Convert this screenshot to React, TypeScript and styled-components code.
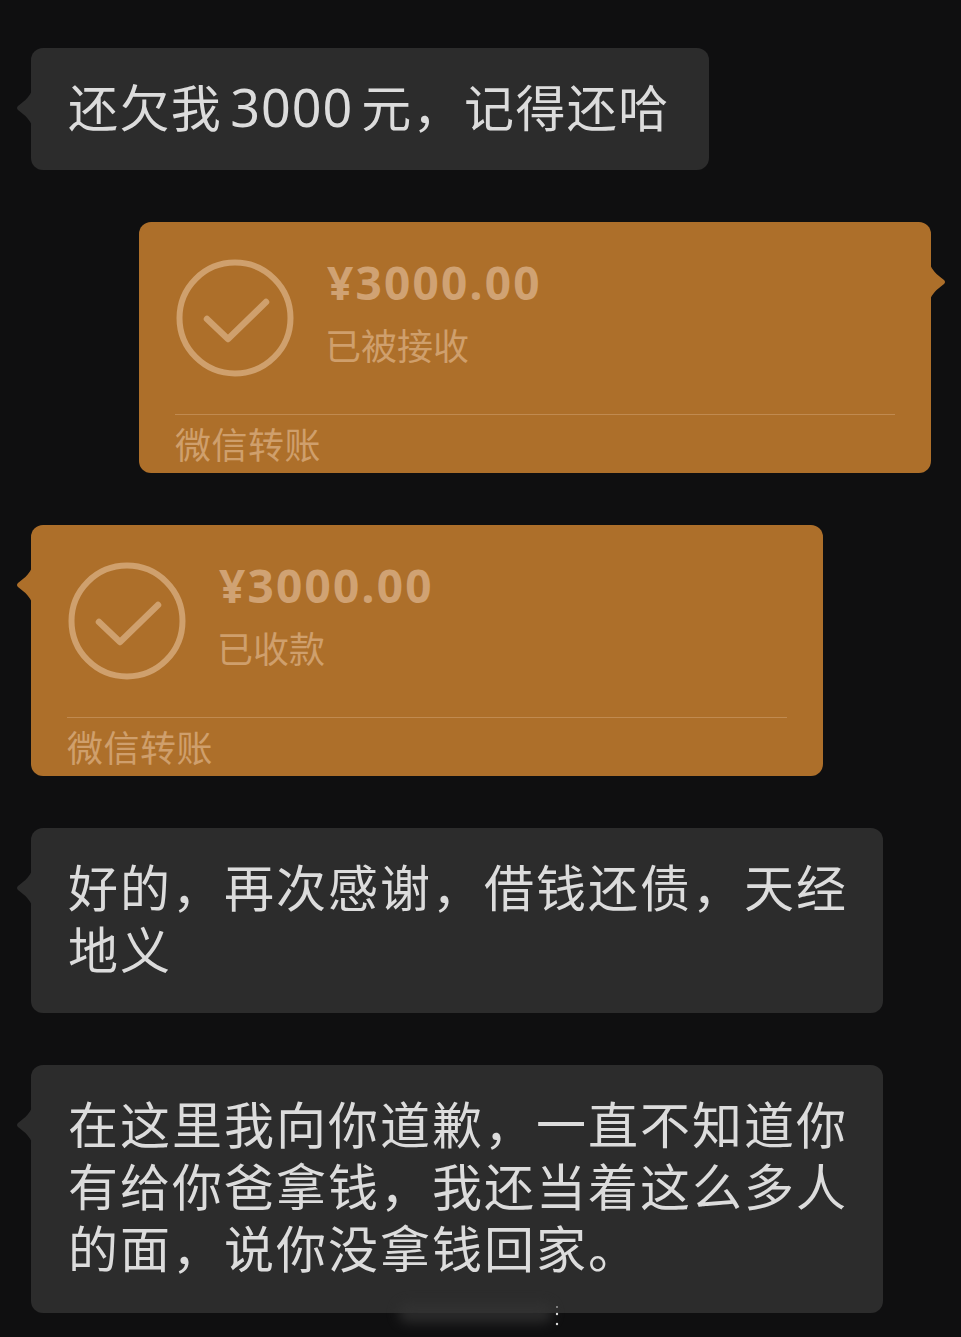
import React from "react";
import styled, { createGlobalStyle } from "styled-components";

const GlobalStyle = createGlobalStyle`
  html, body {
    margin: 0;
    padding: 0;
    background: #0f0f10;
  }
`;

const Page = styled.div`
  position: relative;
  width: 961px;
  height: 1337px;
  box-sizing: border-box;
  padding: 48px 30px 0 31px;
  display: flex;
  flex-direction: column;
  gap: 52px;
  background: #0f0f10;
  overflow: hidden;
  font-family: "Noto Sans CJK SC", "Noto Sans", sans-serif;
`;

const Bubble = styled.div<{ $mine?: boolean; $width: number; $bg: string }>`
  position: relative;
  box-sizing: border-box;
  width: ${(p) => p.$width}px;
  align-self: ${(p) => (p.$mine ? "flex-end" : "flex-start")};
  border-radius: 12px;
  background: ${(p) => p.$bg};
`;

const Tail = styled.svg<{ $mine?: boolean }>`
  position: absolute;
  top: 42px;
  width: 16px;
  height: 36px;
  ${(p) => (p.$mine ? "right: -15px;" : "left: -15px; transform: scaleX(-1);")}
`;

const TextBubble = styled(Bubble)<{ $bottom: number }>`
  padding: 26px 30px ${(p) => p.$bottom}px 37px;
`;

const MessageText = styled.p<{ $tracking: number }>`
  margin: 0;
  color: #dcdcdc;
  font-size: 50px;
  line-height: 62px;
  letter-spacing: ${(p) => p.$tracking}px;
  font-weight: 400;
`;

const Digits = styled.span`
  font-family: "Noto Sans", sans-serif;
  font-size: 52px;
  line-height: 50px;
  letter-spacing: 1px;
  margin: 0 8px 0 8px;
`;

const CardTop = styled.div`
  height: 192px;
  box-sizing: border-box;
  padding: 37px 36px 0 37px;
  display: flex;
  gap: 33px;
`;

const CheckIcon = styled.svg`
  width: 118px;
  height: 118px;
  flex: none;
`;

const AmountBlock = styled.div`
  display: flex;
  flex-direction: column;
  margin-top: -4px;
`;

const Amount = styled.div`
  color: #d0a273;
  font-size: 46px;
  line-height: 54px;
  font-weight: 700;
  letter-spacing: 2.2px;
  font-family: "Noto Sans", "Noto Sans CJK SC", sans-serif;
`;

const Status = styled.div`
  margin: 10px 0 0 -2px;
  color: #cf9f6c;
  font-size: 36px;
  line-height: 50px;
  font-weight: 400;
`;

const CardFooter = styled.div`
  margin: 0 36px;
  height: 58px;
  border-top: 1px solid #c08a50;
  color: #cf9f6c;
  font-size: 36px;
  line-height: 56px;
  letter-spacing: 0.5px;
  font-weight: 400;
`;

const Smudge = styled.div`
  position: absolute;
  left: 398px;
  top: 1303px;
  width: 155px;
  height: 20px;
  border-radius: 10px;
  background: #333333;
  opacity: 0.75;
  filter: blur(6px);
`;

const Dots = styled.svg`
  position: absolute;
  left: 553px;
  top: 1304px;
  width: 8px;
  height: 24px;
`;

const ORANGE = "#ad6f2a";
const GREY = "#2c2c2c";

const BubbleTail = ({ mine, color }: { mine?: boolean; color: string }) => (
  <Tail $mine={mine} viewBox="0 0 16 36">
    <path d="M0 0 C2 6 6 10 14 16 Q16 18 14 20 C6 26 2 30 0 36 Z" fill={color} />
  </Tail>
);

const TransferCard = ({ mine, status }: { mine?: boolean; status: string }) => (
  <Bubble $mine={mine} $width={792} $bg={ORANGE}>
    <BubbleTail mine={mine} color={ORANGE} />
    <CardTop>
      <CheckIcon viewBox="0 0 118 118" fill="none" stroke="#cfa06d">
        <circle cx="59" cy="59" r="55.5" strokeWidth="6" />
        <path d="M31 60 L52 80 L90 43" strokeWidth="6.5" strokeLinecap="round" strokeLinejoin="round" />
      </CheckIcon>
      <AmountBlock>
        <Amount>¥3000.00</Amount>
        <Status>{status}</Status>
      </AmountBlock>
    </CardTop>
    <CardFooter>微信转账</CardFooter>
  </Bubble>
);

const Message = ({
  width,
  bottom = 36,
  tracking = 2,
  children,
}: {
  width: number;
  bottom?: number;
  tracking?: number;
  children: React.ReactNode;
}) => (
  <TextBubble $width={width} $bg={GREY} $bottom={bottom}>
    <BubbleTail color={GREY} />
    <MessageText $tracking={tracking}>{children}</MessageText>
  </TextBubble>
);

export default function App() {
  return (
    <Page>
      <GlobalStyle />
      <Message width={678} bottom={34} tracking={1.4}>
        还欠我<Digits>3000</Digits>元，记得还哈
      </Message>
      <TransferCard mine status="已被接收" />
      <TransferCard status="已收款" />
      <Message width={852} bottom={35}>好的，再次感谢，借钱还债，天经地义</Message>
      <Message width={852}>在这里我向你道歉，一直不知道你有给你爸拿钱，我还当着这么多人的面，说你没拿钱回家。</Message>
      <Smudge />
      <Dots viewBox="0 0 8 24">
        <circle cx="4" cy="3" r="1" fill="#999" />
        <circle cx="4" cy="10" r="1.2" fill="#ddd" />
        <circle cx="4" cy="20" r="1.2" fill="#ddd" />
      </Dots>
    </Page>
  );
}
